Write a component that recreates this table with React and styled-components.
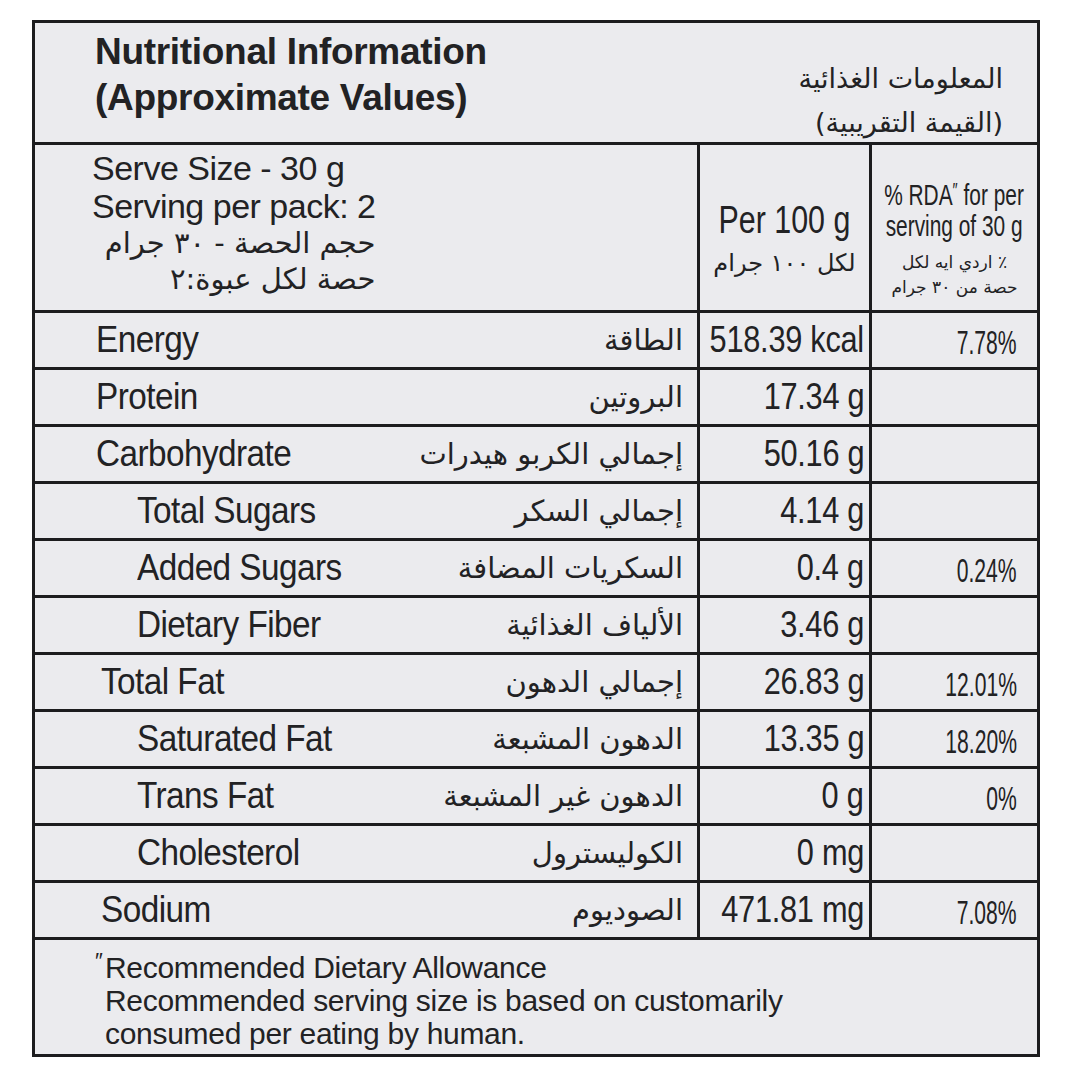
import React from "react";
import styled, { createGlobalStyle } from "styled-components";

const LINE = "#1c1c1e";
const INK = "#222224";
const ARABIC = `"DejaVu Sans", "Noto Sans", sans-serif`;

const GlobalStyle = createGlobalStyle`
  * { box-sizing: border-box; }
  body {
    margin: 0;
    background: #ffffff;
    font-family: "Liberation Sans", Arial, sans-serif;
    color: ${INK};
  }
`;

const Page = styled.div`
  width: 1080px;
  height: 1080px;
  padding: 20px 0 0 32px;
  background: #ffffff;
`;

const Label = styled.div`
  width: 1008px;
  border: 3px solid ${LINE};
  background: #ebebee;
  display: grid;
  grid-template-columns: 665px 172px minmax(0, 1fr);
`;

// the printed label uses a condensed face; squeeze Liberation Sans to match
const Squeeze = styled.span`
  display: inline-block;
  flex-shrink: 0;
  white-space: nowrap;
  transform: scaleX(${(p) => p.$x || 1});
  transform-origin: ${(p) => p.$origin || "center"};
`;

const Cell = styled.div`
  min-width: 0;
  border-bottom: 3px solid ${LINE};
  border-right: ${(p) => (p.$last ? "none" : `3px solid ${LINE}`)};
  height: ${(p) => p.$h || 57}px;
`;

const TitleCell = styled(Cell)`
  grid-column: 1 / -1;
  border-right: none;
  display: flex;
  justify-content: space-between;
  padding: 6px 34px 0 60px;
`;

const Title = styled.h1`
  margin: 0;
  font-size: 37px;
  line-height: 46px;
  font-weight: 700;
  letter-spacing: -0.3px;
`;

const ArabicTitle = styled.div`
  font-family: ${ARABIC};
  font-size: 27px;
  line-height: 44px;
  padding-top: 28px;
  text-align: right;
`;

const ServeCell = styled(Cell)`
  padding: 4px 0 0 57px;
`;

const ServeBlock = styled.div`
  display: inline-flex;
  flex-direction: column;
  font-size: 34px;
  line-height: 38px;
  letter-spacing: -0.5px;
`;

const ArabicLine = styled.div`
  font-family: ${ARABIC};
  font-size: ${(p) => p.$size || 24}px;
  line-height: ${(p) => p.$lh || 36}px;
  letter-spacing: 0;
  white-space: nowrap;
  text-align: ${(p) => p.$align || "right"};
`;

const PerCell = styled(Cell)`
  display: flex;
  flex-direction: column;
  align-items: center;
  padding-top: 50px;
`;

const PerTitle = styled.div`
  font-size: 38px;
  line-height: 50px;
`;

const RdaCell = styled(Cell)`
  display: flex;
  flex-direction: column;
  align-items: center;
  padding-top: 30px;
  text-align: center;
`;

const RdaText = styled.div`
  display: flex;
  flex-direction: column;
  align-items: center;
  font-size: 29px;
  line-height: 31px;
  margin-bottom: 8px;
  sup {
    font-size: 20px;
    vertical-align: 8px;
  }
`;

const NameCell = styled(Cell)`
  display: flex;
  align-items: center;
  justify-content: space-between;
  padding: 0 14px 0 ${(p) => (p.$indent ? 102 : p.$mid ? 66 : 61)}px;
`;

const Name = styled(Squeeze)`
  font-size: 37px;
  letter-spacing: -0.6px;
`;

const ArabicName = styled.span`
  font-family: ${ARABIC};
  font-size: 29px;
  direction: rtl;
  white-space: nowrap;
`;

const ValueCell = styled(Cell)`
  display: flex;
  align-items: center;
  justify-content: flex-end;
  padding-right: 5px;
  font-size: 37px;
  letter-spacing: -0.3px;
`;

const PctCell = styled(Cell)`
  display: flex;
  align-items: center;
  justify-content: flex-end;
  padding: 6px 20px 0 0;
  font-size: 33px;
`;

const Footer = styled.div`
  grid-column: 1 / -1;
  height: 114px;
  padding: 11px 0 0 70px;
  font-size: 30px;
  line-height: 33px;
  letter-spacing: -0.3px;
`;

const FootLine = styled.div`
  position: relative;
  white-space: nowrap;
  sup {
    position: absolute;
    left: -10px;
    top: -7px;
    font-size: 22px;
  }
`;

const rows = [
  { en: "Energy", ar: "الطاقة", val: "518.39 kcal", pct: "7.78%" },
  { en: "Protein", ar: "البروتين", val: "17.34 g" },
  { en: "Carbohydrate", ar: "إجمالي الكربو هيدرات", val: "50.16 g" },
  { en: "Total Sugars", ar: "إجمالي السكر", val: "4.14 g", indent: true },
  { en: "Added Sugars", ar: "السكريات المضافة", val: "0.4 g", pct: "0.24%", indent: true },
  { en: "Dietary Fiber", ar: "الألياف الغذائية", val: "3.46 g", indent: true },
  { en: "Total Fat", ar: "إجمالي الدهون", val: "26.83 g", pct: "12.01%", mid: true },
  { en: "Saturated Fat", ar: "الدهون المشبعة", val: "13.35 g", pct: "18.20%", indent: true },
  { en: "Trans Fat", ar: "الدهون غير المشبعة", val: "0 g", pct: "0%", indent: true },
  { en: "Cholesterol", ar: "الكوليسترول", val: "0 mg", indent: true },
  { en: "Sodium", ar: "الصوديوم", val: "471.81 mg", pct: "7.08%", mid: true },
];

export default function App() {
  return (
    <>
      <GlobalStyle />
      <Page>
        <Label>
          <TitleCell $h={122}>
            <Title>
              Nutritional Information
              <br />
              (Approximate Values)
            </Title>
            <ArabicTitle dir="rtl">
              المعلومات الغذائية
              <br />
              (القيمة التقريبية)
            </ArabicTitle>
          </TitleCell>

          <ServeCell $h={168}>
            <ServeBlock>
              <div>Serve Size - 30 g</div>
              <div>Serving per pack: 2</div>
              <ArabicLine dir="rtl" $size={29}>حجم الحصة - ٣٠ جرام</ArabicLine>
              <ArabicLine dir="rtl" $size={29}>حصة لكل عبوة:٢</ArabicLine>
            </ServeBlock>
          </ServeCell>
          <PerCell $h={168}>
            <PerTitle>
              <Squeeze $x={0.8}>Per 100 g</Squeeze>
            </PerTitle>
            <ArabicLine dir="rtl" $size={24} $align="center">
              لكل ١٠٠ جرام
            </ArabicLine>
          </PerCell>
          <RdaCell $h={168} $last>
            <RdaText>
              <Squeeze $x={0.72}>
                % RDA<sup>″</sup> for per
              </Squeeze>
              <Squeeze $x={0.72}>serving of 30 g</Squeeze>
            </RdaText>
            <ArabicLine dir="rtl" $size={17} $lh={25} $align="center">
              ٪ اردي ايه لكل
              <br />
              حصة من ٣٠ جرام
            </ArabicLine>
          </RdaCell>

          {rows.map((r) => (
            <React.Fragment key={r.en}>
              <NameCell $indent={r.indent} $mid={r.mid}>
                <Name $x={0.9} $origin="left">
                  {r.en}
                </Name>
                <ArabicName dir="rtl">{r.ar}</ArabicName>
              </NameCell>
              <ValueCell>
                <Squeeze $x={0.83} $origin="right">
                  {r.val}
                </Squeeze>
              </ValueCell>
              <PctCell $last>
                {r.pct && (
                  <Squeeze $x={0.64} $origin="right">
                    {r.pct}
                  </Squeeze>
                )}
              </PctCell>
            </React.Fragment>
          ))}

          <Footer>
            <FootLine>
              <sup>″</sup>
              Recommended Dietary Allowance
            </FootLine>
            <FootLine>Recommended serving size is based on customarily</FootLine>
            <FootLine>consumed per eating by human.</FootLine>
          </Footer>
        </Label>
      </Page>
    </>
  );
}
